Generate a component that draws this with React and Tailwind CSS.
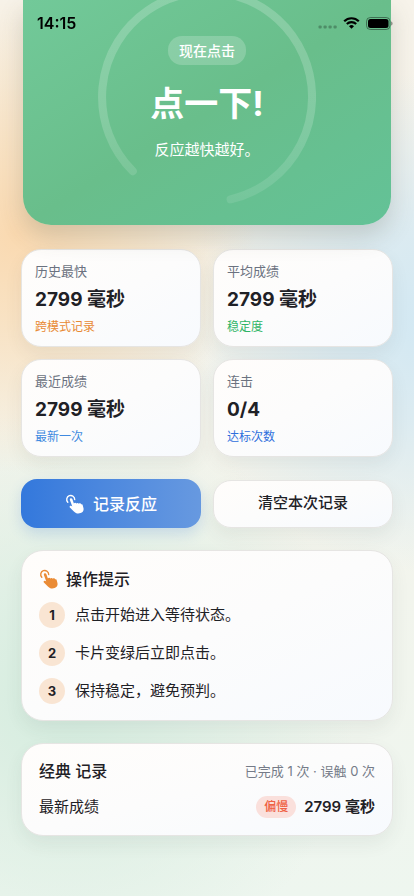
const STATS = [
  { label: "历史最快", value: "2799 毫秒", note: "跨模式记录", tone: "text-[#e88a34]" },
  { label: "平均成绩", value: "2799 毫秒", note: "稳定度", tone: "text-[#2fb566]" },
  { label: "最近成绩", value: "2799 毫秒", note: "最新一次", tone: "text-[#3f8ae0]" },
  { label: "连击", value: "0/4", note: "达标次数", tone: "text-[#2f6fdc]" },
];

const TIPS = ["点击开始进入等待状态。", "卡片变绿后立即点击。", "保持稳定，避免预判。"];

const PANEL =
  "border border-[#e6e5e3] bg-linear-to-br from-[#fffdfb] via-[#fcfcfc] to-[#f7fafe] shadow-[0_8px_18px_rgba(60,70,70,0.07)]";

function TapIcon({ className }) {
  return (
    <svg viewBox="0 0 20 20" className={className} fill="none" aria-hidden="true">
      <path
        d="M2.800 8.200A4 4 0 1 1 9.700 5.600"
        stroke="currentColor"
        strokeWidth="1.4"
        strokeLinecap="round"
      />
      <path
        d="M4.900 5.900C4.400 4.300 6.700 3.500 7.300 5.100L8.900 9.500C9.400 8.600 10.900 8.600 11.300 9.500C11.900 8.600 13.400 8.700 13.800 9.700C14.500 8.900 15.900 9.200 16.100 10.300C17 9.900 17.600 10.500 17.800 11.400L18.500 14.200C19 16.400 17.700 18.300 15.600 19C13 19.900 10.600 19.300 8.900 17.400L4.900 13.600C4 12.300 5.300 11.200 6.500 11.900L7.300 12.400Z"
        fill="currentColor"
      />
    </svg>
  );
}

function StatusBar() {
  return (
    <div className="fixed inset-x-0 top-0 z-10 flex items-center justify-between pt-3 pr-[21px] pl-[37px] text-black">
      <span className="text-base leading-[22px] font-semibold">14:15</span>
      <div className="flex items-center gap-1.5">
        <svg viewBox="0 0 19 4" className="mt-2 h-1 w-[19px]" aria-hidden="true">
          <g fill="#000" fillOpacity="0.26">
            <rect x="0.500" y="0.4" width="3.2" height="3.2" rx="1" />
            <rect x="5.500" y="0.4" width="3.2" height="3.2" rx="1" />
            <rect x="10.500" y="0.4" width="3.2" height="3.2" rx="1" />
            <rect x="15.500" y="0.4" width="3.2" height="3.2" rx="1" />
          </g>
        </svg>
        <svg viewBox="0 0 17 12" className="h-3 w-[17px]" fill="none" aria-hidden="true">
          <path d="M1.200 4.300a10.300 10.300 0 0 1 14.600 0" stroke="#000" strokeWidth="2.2" />
          <path d="M3.800 7.100a6.700 6.700 0 0 1 9.400 0" stroke="#000" strokeWidth="2.1" />
          <path d="M8.500 11.700L6 9.200a3.600 3.600 0 0 1 5 0z" fill="#000" />
        </svg>
        <svg viewBox="0 0 27 13" className="h-[13px] w-[27px]" aria-hidden="true">
          <rect x="0.5" y="0.5" width="23.500" height="12" rx="3.800" fill="none" stroke="#000" strokeOpacity="0.4" />
          <rect x="2" y="2" width="20.500" height="9" rx="2.500" fill="#000" />
          <path d="M25.200 4.500v4c.8-.3 1.300-1.100 1.300-2s-.5-1.700-1.300-2z" fill="#000" fillOpacity="0.45" />
        </svg>
      </div>
    </div>
  );
}

function TapZone() {
  return (
    <div className="px-0.5">
      <button
        type="button"
        className="relative flex w-full flex-col items-center overflow-hidden rounded-b-[28px] bg-linear-to-br from-[#72c999] via-[#69be8b] to-[#63c297] pt-9 pb-[63px] text-white shadow-[0_12px_24px_rgba(70,75,60,0.2)]"
      >
        <svg
          viewBox="0 0 218 218"
          className="absolute top-[-12px] left-1/2 w-[218px] -translate-x-1/2"
          fill="none"
          aria-hidden="true"
        >
          <defs>
            <linearGradient id="ring" x1="0" y1="0" x2="0" y2="1">
              <stop offset="0" stopColor="#fff" stopOpacity="0.2" />
              <stop offset="0.6" stopColor="#fff" stopOpacity="0.18" />
              <stop offset="1" stopColor="#fff" stopOpacity="0.1" />
            </linearGradient>
          </defs>
          <path
            d="M34.800 183.200A105 105 0 1 1 132.600 211.300"
            stroke="url(#ring)"
            strokeWidth="8"
            strokeLinecap="round"
          />
        </svg>
        <span className="rounded-[14px] bg-white/20 px-[11px] text-sm leading-[29px] font-medium">现在点击</span>
        <span className="mt-[17px] text-[34px] leading-[44px] font-bold">点一下!</span>
        <span className="mt-3 text-[15px] leading-6">反应越快越好。</span>
      </button>
    </div>
  );
}

function StatCard({ label, value, note, tone }) {
  return (
    <div className={`rounded-[20px] px-[13px] pt-3 pb-2.5 ${PANEL}`}>
      <p className="text-[13px] leading-[18px] text-[#6b7280]">{label}</p>
      <p className="mt-2 text-[19px] leading-6 font-bold">{value}</p>
      <p className={`mt-1.5 text-xs leading-[18px] ${tone}`}>{note}</p>
    </div>
  );
}

export default function App() {
  return (
    <div className="min-h-screen bg-[radial-gradient(circle_at_4%_26%,#fad9b0_0px,#f9debacc_90px,#f9e9d400_240px),radial-gradient(circle_at_104%_36%,#d2e8f3_0px,#d6e9f2cc_100px,#e4eff100_250px),radial-gradient(circle_at_16%_78%,#d4ecde_0px,#daeee2cc_110px,#e8f4ec00_290px),linear-gradient(180deg,#f7f3ea_0%,#f4f4ec_50%,#eef6ef_100%)] font-[Inter,'Noto_Sans_CJK_SC',sans-serif] text-[#1f2126]">
      <StatusBar />
      <main className="px-[21px] pb-[60px]">
        <TapZone />

        <section className="mt-6 grid grid-cols-2 gap-3">
          {STATS.map((stat) => (
            <StatCard key={stat.label} {...stat} />
          ))}
        </section>

        <div className="mt-[22px] grid grid-cols-2 items-center gap-3">
          <button
            type="button"
            className="flex h-[49px] items-center justify-center gap-2 rounded-2xl bg-linear-to-r from-[#3378dc] to-[#6799e0] text-base font-medium text-white shadow-[0_6px_14px_rgba(60,120,215,0.2)]"
          >
            <TapIcon className="size-5" />
            记录反应
          </button>
          <button type="button" className={`h-12 rounded-[18px] text-[15px] font-medium ${PANEL}`}>
            清空本次记录
          </button>
        </div>

        <section className={`mt-[22px] rounded-[22px] px-[17px] py-4 ${PANEL}`}>
          <h2 className="flex items-center gap-[7px] text-base leading-6 font-medium">
            <TapIcon className="size-5 text-[#ea8b35]" />
            操作提示
          </h2>
          <ol className="mt-[11px] flex flex-col gap-3">
            {TIPS.map((tip, index) => (
              <li key={tip} className="flex items-center gap-2.5 text-[15px] leading-6">
                <span className="flex size-[26px] items-center justify-center rounded-full bg-[#f9e5d3] text-[13px] font-bold">
                  {index + 1}
                </span>
                {tip}
              </li>
            ))}
          </ol>
        </section>

        <section className={`mt-[22px] rounded-[22px] px-[17px] pt-[15px] pb-[17px] ${PANEL}`}>
          <div className="flex items-center justify-between">
            <h2 className="text-base leading-6 font-medium">经典 记录</h2>
            <p className="text-[13px] leading-5 text-[#757b88]">已完成 1 次 · 误触 0 次</p>
          </div>
          <div className="mt-[13px] flex items-center justify-between text-[15px] leading-[22px]">
            <span>最新成绩</span>
            <div className="flex items-center gap-2">
              <span className="rounded-full bg-[#fae0dc] px-2 text-xs leading-[22px] font-medium text-[#ef6044]">偏慢</span>
              <span className="font-semibold">2799 毫秒</span>
            </div>
          </div>
        </section>
      </main>
    </div>
  );
}
